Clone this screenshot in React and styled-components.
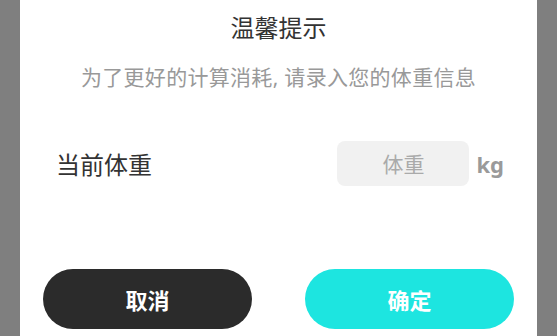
import React, { useState } from 'react'
import styled, { createGlobalStyle } from 'styled-components'

const GlobalStyle = createGlobalStyle`
  html, body {
    margin: 0;
    padding: 0;
    background: #7f7f7f;
    font-family: "Noto Sans", "Noto Sans CJK SC", sans-serif;
  }
`

const Overlay = styled.div`
  height: 336px;
  padding: 0 20px;
  box-sizing: border-box;
  display: flex;
`

const Dialog = styled.div`
  flex: 1;
  background: #fff;
  display: flex;
  flex-direction: column;
  align-items: stretch;
`

const Title = styled.h2`
  margin: 13px 0 0;
  font-size: 24px;
  line-height: 30px;
  font-weight: 400;
  color: #333;
  text-align: center;
`

const Hint = styled.p`
  margin: 20px 0 0;
  font-size: 21px;
  line-height: 28px;
  letter-spacing: 0.3px;
  color: #999;
  text-align: center;
`

const Row = styled.div`
  margin-top: 50px;
  padding: 0 33px 0 36px;
  display: flex;
  align-items: center;
  justify-content: space-between;
`

const Label = styled.span`
  font-size: 24px;
  color: #333;
`

const InputGroup = styled.div`
  display: flex;
  align-items: center;
  gap: 7px;
`

const WeightInput = styled.input`
  width: 132px;
  height: 45px;
  box-sizing: border-box;
  border: none;
  outline: none;
  border-radius: 8px;
  background: #f1f1f1;
  font-family: inherit;
  font-size: 21px;
  color: #333;
  text-align: center;
  &::placeholder {
    color: #aaa;
  }
`

const Unit = styled.span`
  font-size: 22px;
  font-weight: 700;
  color: #9a9a9a;
`

const Actions = styled.div`
  margin-top: 83px;
  padding: 0 23px;
  display: flex;
  justify-content: space-between;
`

const Button = styled.button`
  width: 209px;
  height: 60px;
  border: none;
  border-radius: 30px;
  background: ${(p) => (p.primary ? '#1de5e0' : '#2b2b2b')};
  color: #fff;
  font-family: inherit;
  font-size: 22px;
  font-weight: 700;
  cursor: pointer;
`

export default function App() {
  const [weight, setWeight] = useState('')

  return (
    <>
      <GlobalStyle />
      <Overlay>
        <Dialog>
          <Title>温馨提示</Title>
          <Hint>为了更好的计算消耗, 请录入您的体重信息</Hint>
          <Row>
            <Label>当前体重</Label>
            <InputGroup>
              <WeightInput
                placeholder="体重"
                value={weight}
                onChange={(e) => setWeight(e.target.value)}
              />
              <Unit>kg</Unit>
            </InputGroup>
          </Row>
          <Actions>
            <Button>取消</Button>
            <Button primary>确定</Button>
          </Actions>
        </Dialog>
      </Overlay>
    </>
  )
}
